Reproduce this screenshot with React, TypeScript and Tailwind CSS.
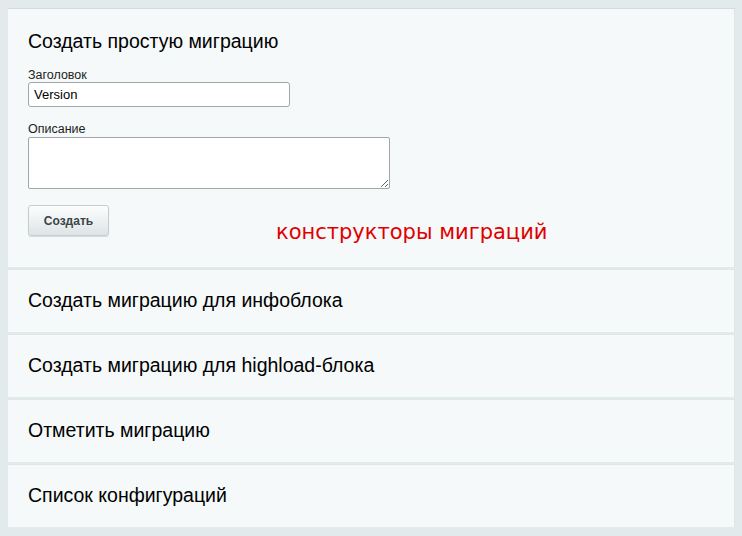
export default function App() {
  const sections = [
    "Создать миграцию для инфоблока",
    "Создать миграцию для highload-блока",
    "Отметить миграцию",
    "Список конфигураций",
  ];

  return (
    <div className="w-[742px] h-[536px] bg-[#e3eaec] pt-2 px-2 font-['Liberation_Sans',Arial,sans-serif]">
      <div className="w-[727px] flex flex-col border-t border-[#d4dbdd]">
        <div className="bg-[#f5f9f9] h-[258px] px-5 pt-[20px] relative border-r border-[#dfe6e8]">
          <h2 className="text-[19.5px] leading-6 text-black">Создать простую миграцию</h2>
          <div className="mt-[15px] text-[12.5px] leading-[14px] text-[#222]">Заголовок</div>
          <input
            type="text"
            defaultValue="Version"
            className="block w-[262px] h-[25px] px-[5px] text-[13px] bg-white border border-[#a0a7a9] rounded-[3px] outline-none text-black"
          />
          <div className="mt-[15px] text-[12.5px] leading-[14px] text-[#222]">Описание</div>
          <textarea className="mt-[1px] block w-[362px] h-[52px] bg-white border border-[#a0a7a9] rounded-[2px] outline-none" />
          <button className="mt-[16px] w-[81px] h-[31px] rounded-[3px] border border-[#c6cdcf] bg-gradient-to-b from-[#fdfefe] to-[#dde4e6] shadow-[0_1px_1px_rgba(0,0,0,0.12)] text-[12px] font-bold text-[#3b4446]">
            Создать
          </button>
          <div className="absolute left-[268px] top-[211px] text-[21px] leading-6 text-[#e00000] font-['DejaVu_Sans',sans-serif]">
            конструкторы миграций
          </div>
        </div>
        {sections.map((s) => (
          <div
            key={s}
            className="bg-[#f5f9f9] h-[63px] mt-[2px] px-5 flex items-center border-t border-[#cdd4d6] border-r border-[#dfe6e8]"
          >
            <span className="text-[19.5px] text-black">{s}</span>
          </div>
        ))}
      </div>
    </div>
  );
}
